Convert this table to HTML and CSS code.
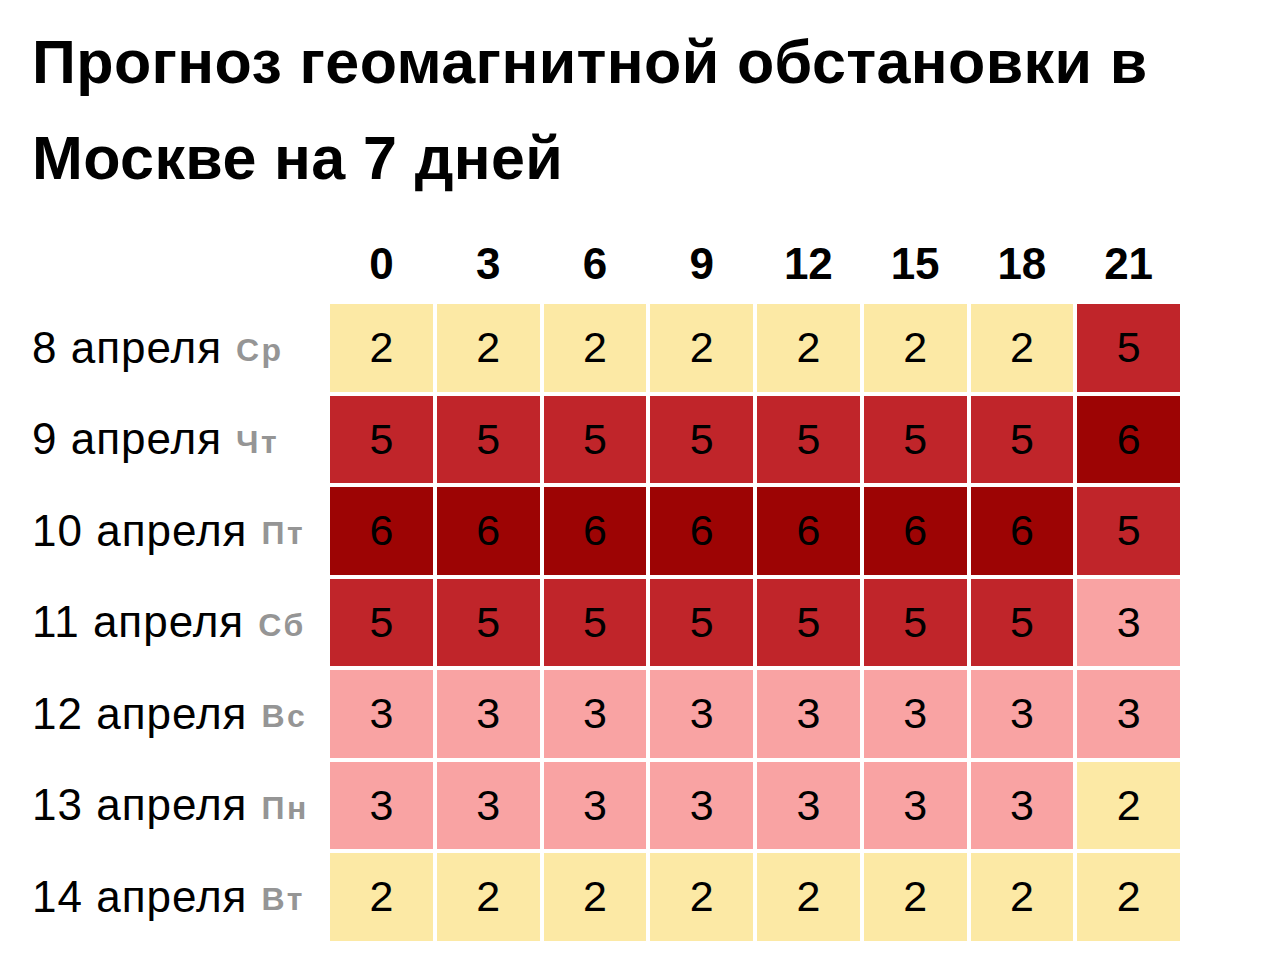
FILE: index.html
```html
<!DOCTYPE html>
<html lang="ru">
<head>
<meta charset="utf-8">
<title>Прогноз геомагнитной обстановки в Москве на 7 дней</title>
<link rel="stylesheet" href="styles.css">
</head>
<body>
<main class="page">
  <h1 class="title">Прогноз геомагнитной обстановки в Москве на 7 дней</h1>
  <div class="grid">
    <div class="corner"></div>
    <div class="hour">0</div><div class="hour">3</div><div class="hour">6</div><div class="hour">9</div><div class="hour">12</div><div class="hour">15</div><div class="hour">18</div><div class="hour">21</div>

    <div class="day">8 апреля <span class="wd">Ср</span></div>
    <div class="cell k2">2</div><div class="cell k2">2</div><div class="cell k2">2</div><div class="cell k2">2</div><div class="cell k2">2</div><div class="cell k2">2</div><div class="cell k2">2</div><div class="cell k5">5</div>

    <div class="day">9 апреля <span class="wd">Чт</span></div>
    <div class="cell k5">5</div><div class="cell k5">5</div><div class="cell k5">5</div><div class="cell k5">5</div><div class="cell k5">5</div><div class="cell k5">5</div><div class="cell k5">5</div><div class="cell k6">6</div>

    <div class="day">10 апреля <span class="wd">Пт</span></div>
    <div class="cell k6">6</div><div class="cell k6">6</div><div class="cell k6">6</div><div class="cell k6">6</div><div class="cell k6">6</div><div class="cell k6">6</div><div class="cell k6">6</div><div class="cell k5">5</div>

    <div class="day">11 апреля <span class="wd">Сб</span></div>
    <div class="cell k5">5</div><div class="cell k5">5</div><div class="cell k5">5</div><div class="cell k5">5</div><div class="cell k5">5</div><div class="cell k5">5</div><div class="cell k5">5</div><div class="cell k3">3</div>

    <div class="day">12 апреля <span class="wd">Вс</span></div>
    <div class="cell k3">3</div><div class="cell k3">3</div><div class="cell k3">3</div><div class="cell k3">3</div><div class="cell k3">3</div><div class="cell k3">3</div><div class="cell k3">3</div><div class="cell k3">3</div>

    <div class="day">13 апреля <span class="wd">Пн</span></div>
    <div class="cell k3">3</div><div class="cell k3">3</div><div class="cell k3">3</div><div class="cell k3">3</div><div class="cell k3">3</div><div class="cell k3">3</div><div class="cell k3">3</div><div class="cell k2">2</div>

    <div class="day">14 апреля <span class="wd">Вт</span></div>
    <div class="cell k2">2</div><div class="cell k2">2</div><div class="cell k2">2</div><div class="cell k2">2</div><div class="cell k2">2</div><div class="cell k2">2</div><div class="cell k2">2</div><div class="cell k2">2</div>
  </div>
</main>
</body>
</html>
```

FILE: styles.css
```css
html, body {
  margin: 0;
  padding: 0;
  background: #ffffff;
}

body {
  font-family: "Liberation Sans", Arial, sans-serif;
  color: #000000;
}

.page {
  padding: 14px 0 0 32px;
}

.title {
  margin: 0;
  width: 1200px;
  font-size: 61px;
  font-weight: 700;
  line-height: 96px;
  letter-spacing: 0.4px;
}

.grid {
  margin-top: 38px;
  display: grid;
  grid-template-columns: 294px repeat(8, 102.75px);
  grid-template-rows: 56px repeat(7, 87.5px);
  gap: 4px;
}

.hour {
  align-self: start;
  height: 40px;
  line-height: 40px;
  text-align: center;
  font-size: 44px;
  font-weight: 700;
}

.day {
  display: flex;
  align-items: center;
  white-space: nowrap;
  font-size: 44px;
  letter-spacing: 1px;
}

.wd {
  margin-left: 14px;
  padding-top: 6px;
  font-size: 32px;
  font-weight: 700;
  letter-spacing: 2.5px;
  color: #959595;
}

.cell {
  display: flex;
  align-items: center;
  justify-content: center;
  font-size: 43px;
}

.k2 { background: #fce9a5; }
.k3 { background: #f9a3a3; }
.k5 { background: #c0252a; }
.k6 { background: #9d0404; }
```
